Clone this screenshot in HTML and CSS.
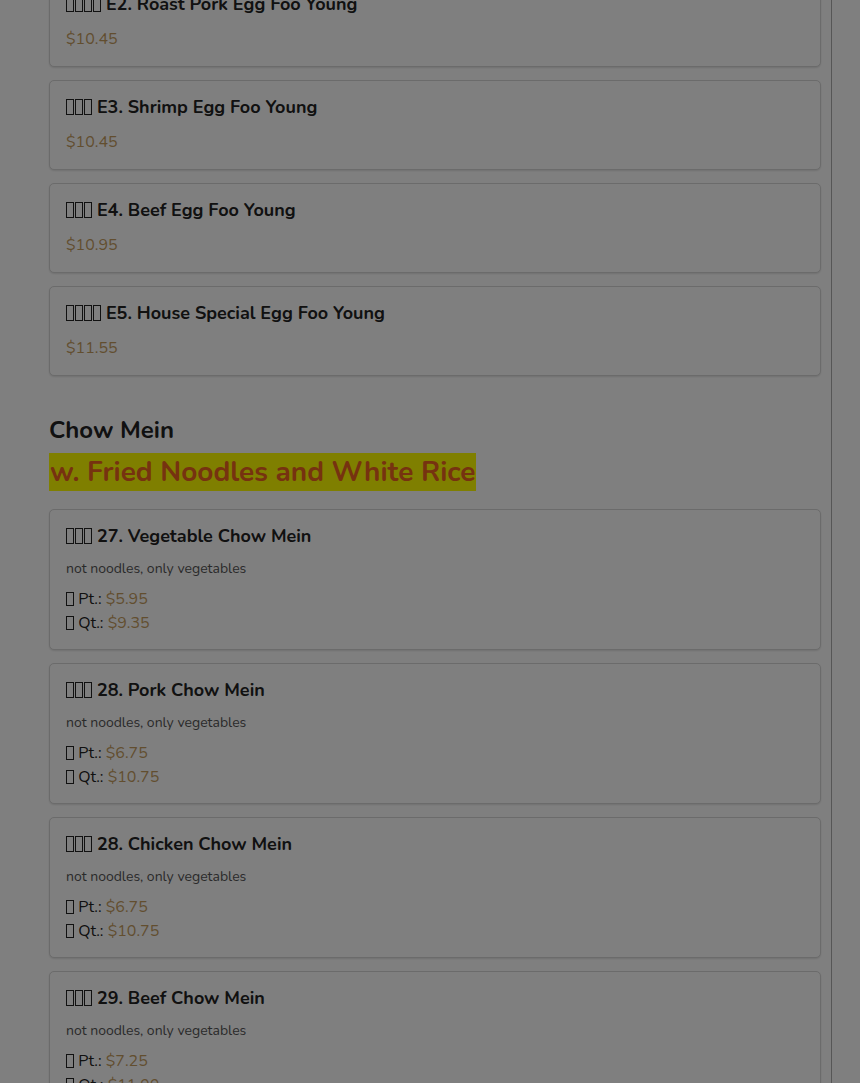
FILE: index.html
```html
<!DOCTYPE html>
<html lang="en">
<head>
<meta charset="utf-8">
<title>Menu</title>
<link rel="stylesheet" href="styles.css">
</head>
<body>
<div class="page">
  <div class="scroll">
    <div class="card">
      <h3 class="item-title"><span class="cjk"><i></i><i></i><i></i><i></i></span> E2. Roast Pork Egg Foo Young</h3>
      <div class="price">$10.45</div>
    </div>
    <div class="card">
      <h3 class="item-title"><span class="cjk"><i></i><i></i><i></i></span> E3. Shrimp Egg Foo Young</h3>
      <div class="price">$10.45</div>
    </div>
    <div class="card">
      <h3 class="item-title"><span class="cjk"><i></i><i></i><i></i></span> E4. Beef Egg Foo Young</h3>
      <div class="price">$10.95</div>
    </div>
    <div class="card">
      <h3 class="item-title"><span class="cjk"><i></i><i></i><i></i><i></i></span> E5. House Special Egg Foo Young</h3>
      <div class="price">$11.55</div>
    </div>

    <h2 class="section-title">Chow Mein</h2>
    <div class="section-note"><span class="mark">w. Fried Noodles and White Rice</span></div>

    <div class="card card-sized">
      <h3 class="item-title"><span class="cjk"><i></i><i></i><i></i></span> 27. Vegetable Chow Mein</h3>
      <p class="desc">not noodles, only vegetables</p>
      <div class="size"><span class="cjk"><i></i></span> Pt.: <span class="amt">$5.95</span></div>
      <div class="size"><span class="cjk"><i></i></span> Qt.: <span class="amt">$9.35</span></div>
    </div>
    <div class="card card-sized">
      <h3 class="item-title"><span class="cjk"><i></i><i></i><i></i></span> 28. Pork Chow Mein</h3>
      <p class="desc">not noodles, only vegetables</p>
      <div class="size"><span class="cjk"><i></i></span> Pt.: <span class="amt">$6.75</span></div>
      <div class="size"><span class="cjk"><i></i></span> Qt.: <span class="amt">$10.75</span></div>
    </div>
    <div class="card card-sized">
      <h3 class="item-title"><span class="cjk"><i></i><i></i><i></i></span> 28. Chicken Chow Mein</h3>
      <p class="desc">not noodles, only vegetables</p>
      <div class="size"><span class="cjk"><i></i></span> Pt.: <span class="amt">$6.75</span></div>
      <div class="size"><span class="cjk"><i></i></span> Qt.: <span class="amt">$10.75</span></div>
    </div>
    <div class="card card-sized">
      <h3 class="item-title"><span class="cjk"><i></i><i></i><i></i></span> 29. Beef Chow Mein</h3>
      <p class="desc">not noodles, only vegetables</p>
      <div class="size"><span class="cjk"><i></i></span> Pt.: <span class="amt">$7.25</span></div>
      <div class="size"><span class="cjk"><i></i></span> Qt.: <span class="amt">$11.00</span></div>
    </div>
  </div>
</div>
<div class="backdrop"></div>
</body>
</html>
```

FILE: styles.css
```css
html, body {
  margin: 0;
  padding: 0;
  background: #ffffff;
  height: 1083px;
  overflow: hidden;
}
body {
  font-family: "Nunito", "Lato", "Noto Sans", sans-serif;
  color: #222222;
}
.page {
  width: 772px;
  padding: 0 10px 0 49px;
  border-right: 1px solid #acacac;
  min-height: 1083px;
  box-sizing: content-box;
}
.scroll {
  margin-top: -23px;
  display: flex;
  flex-direction: column;
}
.card {
  border: 1px solid #d6d6d6;
  border-radius: 5px;
  box-shadow: 0 1px 2px rgba(0, 0, 0, 0.12);
  padding: 15px 16px;
  margin-bottom: 13px;
  background: #ffffff;
}
.card-sized {
  padding-bottom: 14px;
}
.item-title {
  margin: 0 0 12px;
  font-size: 18px;
  line-height: 22px;
  font-weight: 700;
  color: #222222;
}
.cjk {
  display: inline-flex;
  gap: 1px;
  vertical-align: -2px;
}
.cjk i {
  display: inline-block;
  width: 6px;
  height: 14px;
  border: 1px solid currentColor;
}
.price {
  font-size: 16px;
  line-height: 24px;
  color: #c59d5f;
}
.desc {
  margin: 0 0 8px;
  font-size: 14px;
  line-height: 20px;
  color: #555555;
}
.size {
  font-size: 16px;
  line-height: 24px;
  color: #222222;
}
.size .cjk i {
  width: 6px;
  height: 12px;
}
.amt {
  color: #c59d5f;
}
.section-title {
  margin: 27px 0 8px;
  font-size: 24px;
  line-height: 29px;
  font-weight: 700;
  color: #222222;
}
.section-note {
  margin: 0 0 18px;
}
.mark {
  display: inline-block;
  background: #ffff00;
  color: #ec6420;
  font-size: 28px;
  font-weight: 700;
  line-height: 38px;
  padding: 0 1px;
}
.backdrop {
  position: fixed;
  inset: 0;
  background: rgba(0, 0, 0, 0.5);
}
```
